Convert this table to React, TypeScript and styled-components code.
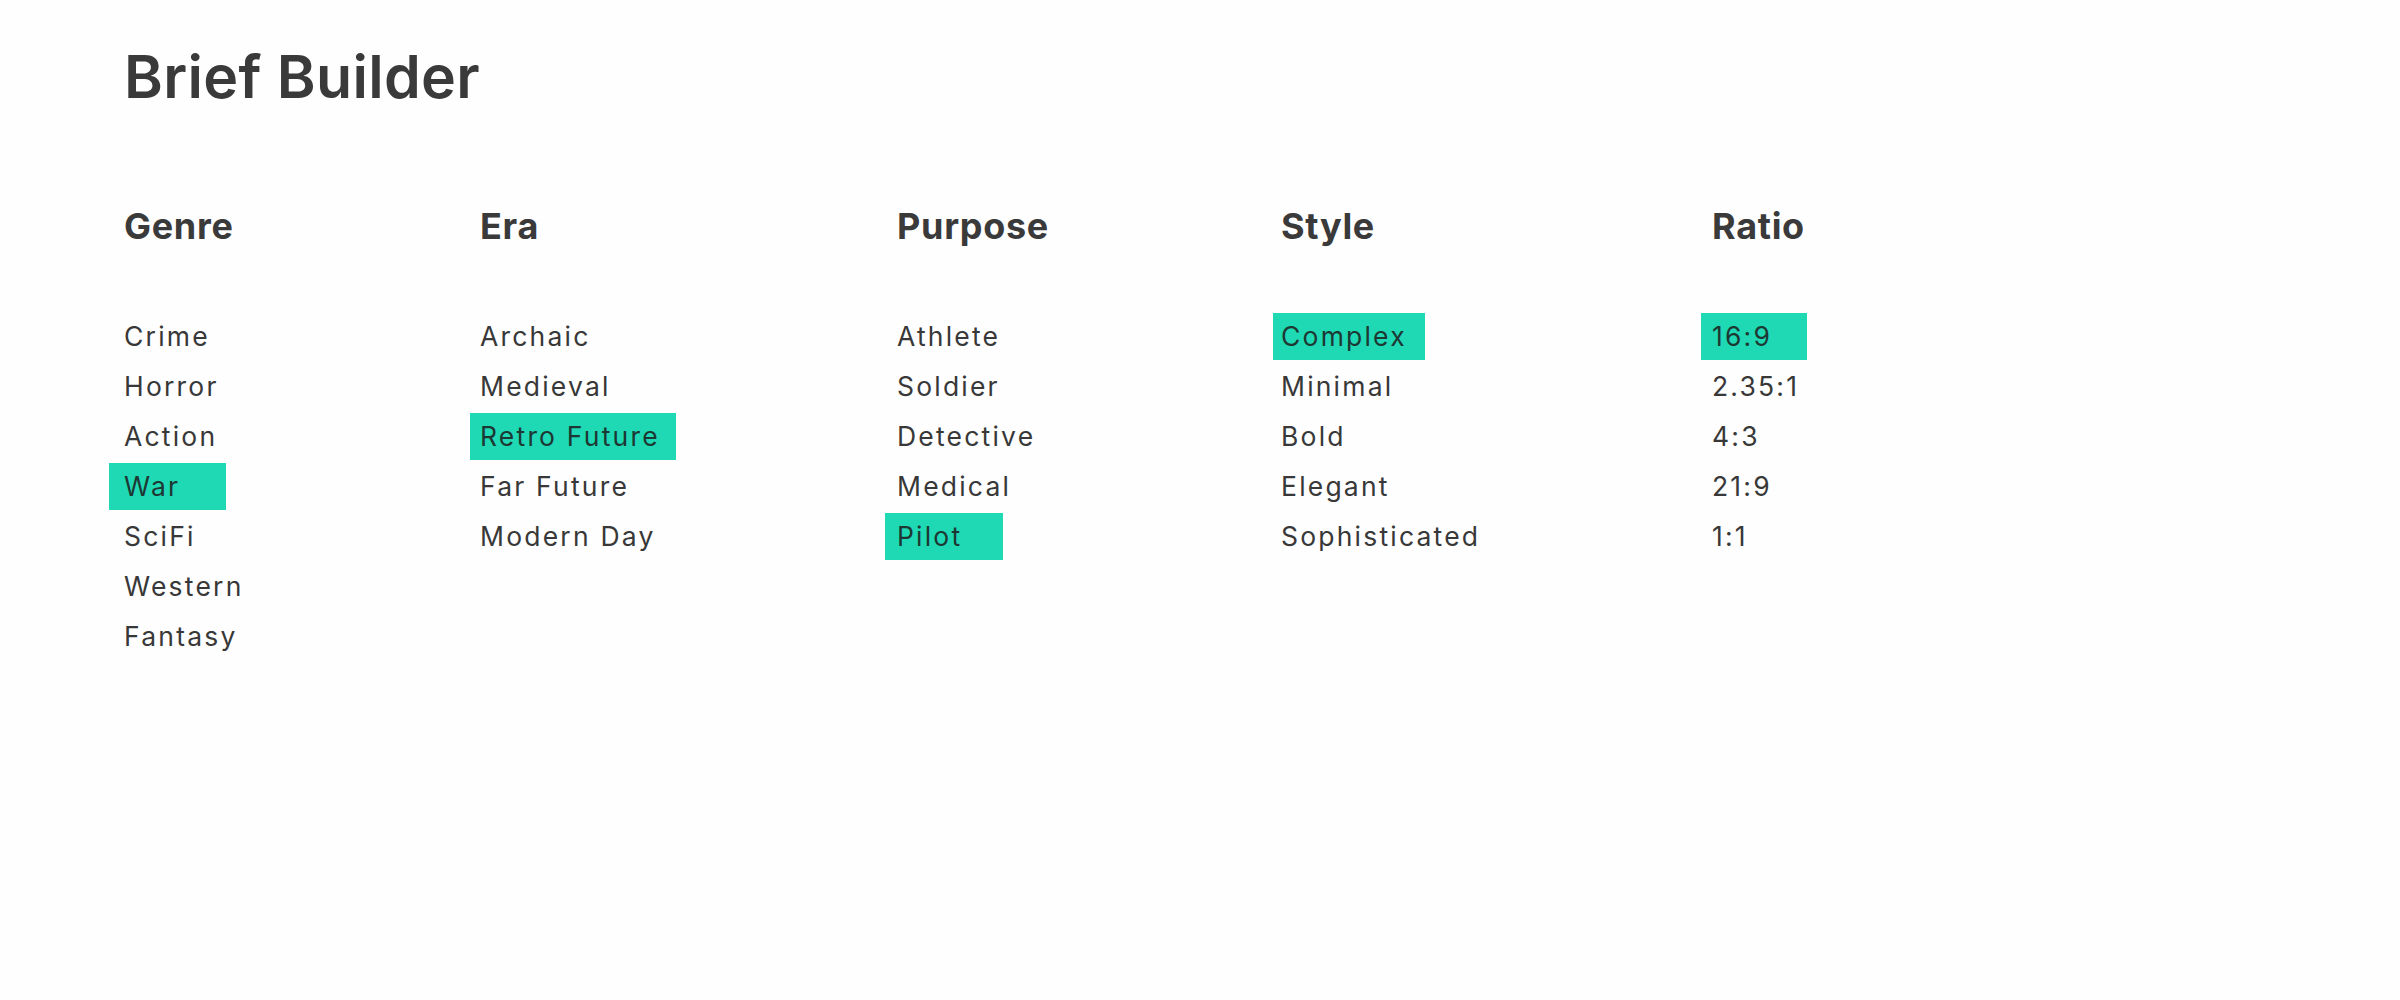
import React from "react";
import styled, { createGlobalStyle } from "styled-components";

const Global = createGlobalStyle`
  html, body {
    margin: 0;
    padding: 0;
    background: #fefefe;
  }
  body {
    font-family: "Inter", "Lato", "Noto Sans", sans-serif;
    color: #383838;
  }
`;

const Page = styled.main`
  padding: 47px 0 0 124px;
  min-height: 1000px;
  box-sizing: border-box;
`;

const Title = styled.h1`
  margin: 0;
  font-size: 59px;
  line-height: 60px;
  font-weight: 600;
  color: #3a3a3a;
  letter-spacing: 0.3px;
`;

const Columns = styled.div`
  display: flex;
  margin-top: 101px;
`;

const Column = styled.section<{ $w?: number }>`
  display: flex;
  flex-direction: column;
  width: ${(p) => (p.$w ? `${p.$w}px` : "auto")};
  flex: none;
`;

const Heading = styled.h2`
  margin: 0 0 67px 0;
  font-size: 36px;
  line-height: 36px;
  font-weight: 700;
  color: #3a3a3a;
  letter-spacing: 0.7px;
`;

const List = styled.ul`
  list-style: none;
  margin: 0;
  padding: 0;
  display: flex;
  flex-direction: column;
`;

const Item = styled.li`
  height: 50px;
  display: flex;
  align-items: center;
`;

const Label = styled.span<{ $on?: boolean; $pl?: number; $w?: number }>`
  display: inline-block;
  box-sizing: border-box;
  height: 47px;
  line-height: 47px;
  font-size: 26.5px;
  font-weight: 400;
  letter-spacing: 2.2px;
  white-space: nowrap;
  color: ${(p) => (p.$on ? "#1d3833" : "#383838")};
  background: ${(p) => (p.$on ? "#1fd9b5" : "transparent")};
  margin-left: ${(p) => (p.$on ? `-${p.$pl}px` : "0")};
  padding-left: ${(p) => (p.$on ? `${p.$pl}px` : "0")};
  width: ${(p) => (p.$on && p.$w ? `${p.$w}px` : "auto")};
`;

type Opt = { text: string; sel?: { pl: number; w: number } };
type Group = { title: string; width?: number; items: Opt[] };

const groups: Group[] = [
  {
    title: "Genre",
    width: 356,
    items: [
      { text: "Crime" },
      { text: "Horror" },
      { text: "Action" },
      { text: "War", sel: { pl: 15, w: 117 } },
      { text: "SciFi" },
      { text: "Western" },
      { text: "Fantasy" },
    ],
  },
  {
    title: "Era",
    width: 417,
    items: [
      { text: "Archaic" },
      { text: "Medieval" },
      { text: "Retro Future", sel: { pl: 10, w: 206 } },
      { text: "Far Future" },
      { text: "Modern Day" },
    ],
  },
  {
    title: "Purpose",
    width: 384,
    items: [
      { text: "Athlete" },
      { text: "Soldier" },
      { text: "Detective" },
      { text: "Medical" },
      { text: "Pilot", sel: { pl: 12, w: 118 } },
    ],
  },
  {
    title: "Style",
    width: 431,
    items: [
      { text: "Complex", sel: { pl: 8, w: 152 } },
      { text: "Minimal" },
      { text: "Bold" },
      { text: "Elegant" },
      { text: "Sophisticated" },
    ],
  },
  {
    title: "Ratio",
    items: [
      { text: "16:9", sel: { pl: 11, w: 106 } },
      { text: "2.35:1" },
      { text: "4:3" },
      { text: "21:9" },
      { text: "1:1" },
    ],
  },
];

export default function App() {
  return (
    <>
      <Global />
      <Page>
        <Title>Brief Builder</Title>
        <Columns>
          {groups.map((g) => (
            <Column key={g.title} $w={g.width}>
              <Heading>{g.title}</Heading>
              <List>
                {g.items.map((it) => (
                  <Item key={it.text}>
                    <Label $on={!!it.sel} $pl={it.sel?.pl} $w={it.sel?.w}>
                      {it.text}
                    </Label>
                  </Item>
                ))}
              </List>
            </Column>
          ))}
        </Columns>
      </Page>
    </>
  );
}
